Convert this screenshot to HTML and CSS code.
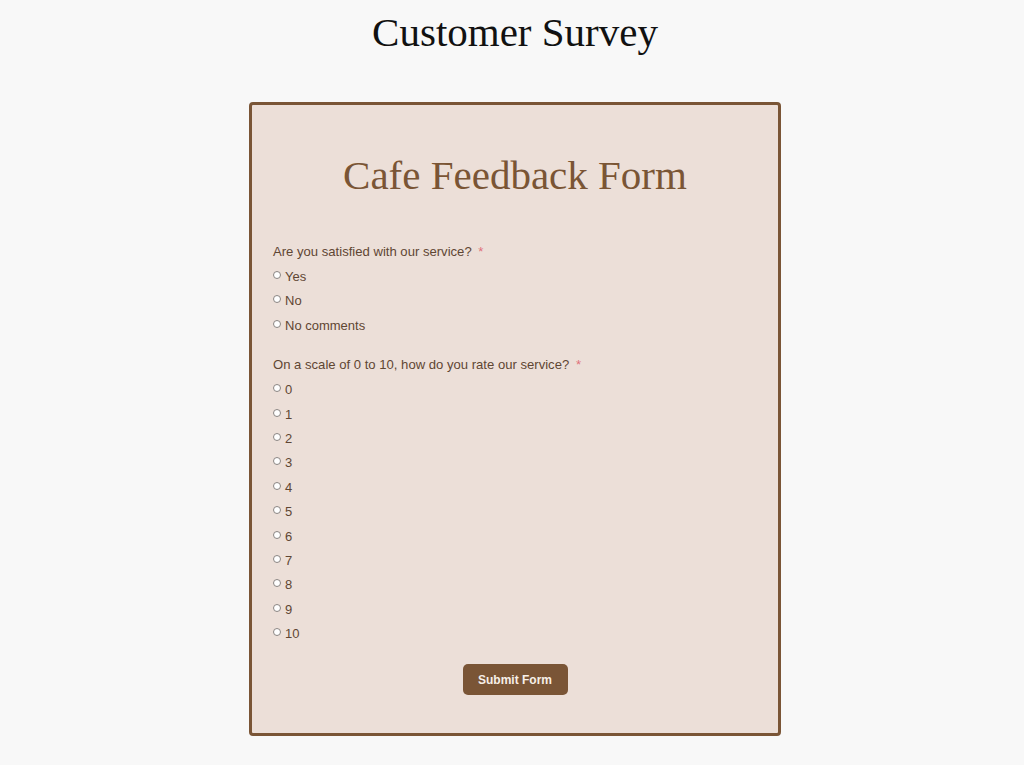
FILE: index.html
```html
<!DOCTYPE html>
<html lang="en">
<head>
<meta charset="utf-8">
<title>Customer Survey</title>
<link rel="stylesheet" href="styles.css">
</head>
<body>
<h1 class="page-title">Customer Survey</h1>
<form class="survey">
  <h2 class="survey-title">Cafe Feedback Form</h2>
  <fieldset class="group">
    <div class="question">Are you satisfied with our service? <span class="req">*</span></div>
    <label class="opt"><input type="radio" name="sat"><span>Yes</span></label>
    <label class="opt"><input type="radio" name="sat"><span>No</span></label>
    <label class="opt"><input type="radio" name="sat"><span>No comments</span></label>
  </fieldset>
  <fieldset class="group">
    <div class="question">On a scale of 0 to 10, how do you rate our service? <span class="req">*</span></div>
    <label class="opt"><input type="radio" name="rate"><span>0</span></label>
    <label class="opt"><input type="radio" name="rate"><span>1</span></label>
    <label class="opt"><input type="radio" name="rate"><span>2</span></label>
    <label class="opt"><input type="radio" name="rate"><span>3</span></label>
    <label class="opt"><input type="radio" name="rate"><span>4</span></label>
    <label class="opt"><input type="radio" name="rate"><span>5</span></label>
    <label class="opt"><input type="radio" name="rate"><span>6</span></label>
    <label class="opt"><input type="radio" name="rate"><span>7</span></label>
    <label class="opt"><input type="radio" name="rate"><span>8</span></label>
    <label class="opt"><input type="radio" name="rate"><span>9</span></label>
    <label class="opt"><input type="radio" name="rate"><span>10</span></label>
  </fieldset>
  <div class="actions">
    <button type="button" class="submit">Submit Form</button>
  </div>
</form>
</body>
</html>
```
FILE: styles.css
```css
html, body {
  margin: 0;
  padding: 0;
  background: #f8f8f8;
}
body {
  padding-left: 6px;
  padding-bottom: 30px;
}
.page-title {
  margin: 9px 0 0;
  text-align: center;
  font-family: "Liberation Serif", "Times New Roman", serif;
  font-weight: normal;
  font-size: 41px;
  line-height: 46px;
  color: #111;
}
.survey {
  box-sizing: border-box;
  width: 532px;
  margin: 47px auto 0;
  padding: 47px 21px 38px;
  background: #ecdfd8;
  border: 3px solid #7a5536;
  border-radius: 4px;
  font-family: "Liberation Sans", Arial, sans-serif;
  font-size: 13px;
  color: #5f4633;
}
.survey-title {
  margin: 0 0 42px;
  text-align: center;
  font-family: "Liberation Serif", "Times New Roman", serif;
  font-weight: normal;
  font-size: 41px;
  line-height: 46px;
  color: #7a5535;
}
.group {
  border: 0;
  margin: 0 0 15.6px;
  padding: 0;
  display: flex;
  flex-direction: column;
}
.question {
  height: 24.4px;
  line-height: 24px;
  font-size: 13.1px;
}
.req {
  color: #e0707a;
  margin-left: 3px;
}
.opt {
  display: flex;
  align-items: center;
  height: 24.4px;
}
.opt input {
  appearance: none;
  -webkit-appearance: none;
  box-sizing: border-box;
  width: 8px;
  height: 8px;
  margin: -3px 4px 0 0;
  border: 1px solid #8a8582;
  border-radius: 50%;
  background: #fff;
}
.actions {
  display: flex;
  justify-content: center;
  padding-top: 3px;
}
.submit {
  width: 105px;
  height: 31px;
  border: 0;
  border-radius: 5px;
  background: #7a5536;
  color: #f7efe8;
  font-family: "Liberation Sans", Arial, sans-serif;
  font-size: 12px;
  font-weight: bold;
}
```
